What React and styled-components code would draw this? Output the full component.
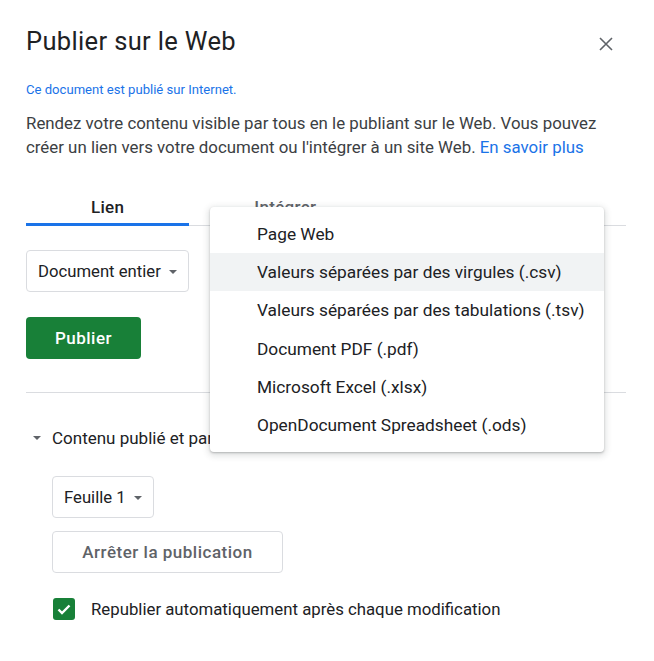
import React, { useState } from "react";
import styled, { createGlobalStyle } from "styled-components";

const GlobalStyle = createGlobalStyle`
  html, body {
    margin: 0;
    padding: 0;
    background: #ffffff;
  }
  body {
    font-family: Roboto, "Liberation Sans", Arial, sans-serif;
    color: #202124;
  }
  * {
    box-sizing: border-box;
  }
`;

const Dialog = styled.div`
  position: relative;
  width: 654px;
  height: 661px;
  padding: 25px 28px 0 26px;
  background: #fff;
  border-radius: 8px;
  overflow: hidden;
`;

const Header = styled.div`
  display: flex;
  align-items: center;
  justify-content: space-between;
  height: 32px;
`;

const Title = styled.h1`
  margin: 0;
  font-size: 25.5px;
  font-weight: 400;
  letter-spacing: 0.35px;
  line-height: 32px;
  color: #202124;
`;

const CloseButton = styled.button`
  display: flex;
  align-items: center;
  justify-content: center;
  width: 24px;
  height: 24px;
  margin-right: 8px;
  margin-top: 5px;
  padding: 0;
  border: none;
  background: none;
  cursor: pointer;
`;

const Status = styled.div`
  margin-top: 25px;
  font-size: 13.1px;
  line-height: 16px;
  color: #1a73e8;
`;

const Intro = styled.p`
  margin: 13px 0 0;
  font-size: 16.85px;
  line-height: 24px;
  color: #3c4043;
`;

const Link = styled.a`
  color: #1a73e8;
  text-decoration: none;
`;

const TabBar = styled.div`
  display: flex;
  margin-top: 30px;
  border-bottom: 1px solid #dadce0;
`;

const Tab = styled.div`
  position: relative;
  height: 36px;
  padding: 0 65px;
  line-height: 36px;
  text-align: center;
  font-size: 17px;
  font-weight: 500;
  letter-spacing: 0.3px;
  color: ${(p) => (p.$active ? "#202124" : "#5f6368")};

  &::after {
    content: "";
    display: ${(p) => (p.$active ? "block" : "none")};
    position: absolute;
    left: 0;
    right: 0;
    bottom: -1px;
    height: 3px;
    background: #1a73e8;
  }
`;

const Select = styled.div`
  display: inline-flex;
  align-items: center;
  gap: 8px;
  height: 42px;
  margin-top: ${(p) => p.$mt || 0}px;
  margin-left: ${(p) => p.$ml || 0}px;
  padding: 0 11px 0 11px;
  border: 1px solid #dadce0;
  border-radius: 4px;
  font-size: 16.7px;
  color: #202124;
`;

const Caret = styled.span`
  width: 0;
  height: 0;
  margin-top: 1px;
  border-left: 4px solid transparent;
  border-right: 4px solid transparent;
  border-top: 4px solid #5f6368;
`;

const Block = styled.div`
  display: flex;
`;

const PrimaryButton = styled.button`
  width: 115px;
  height: 42px;
  margin-top: 25px;
  border: none;
  border-radius: 4px;
  background: #188038;
  color: #fff;
  font-family: inherit;
  font-size: 17px;
  font-weight: 500;
  letter-spacing: 0.5px;
  cursor: pointer;
`;

const Divider = styled.hr`
  margin: 33px 0 0;
  border: none;
  border-top: 1px solid #dadce0;
`;

const Disclosure = styled.div`
  display: flex;
  align-items: center;
  gap: 11px;
  margin-top: 33px;
  padding-left: 7px;
  font-size: 17px;
  line-height: 24px;
  color: #202124;
`;

const SmallCaret = styled.span`
  width: 0;
  height: 0;
  border-left: 4px solid transparent;
  border-right: 4px solid transparent;
  border-top: 4px solid #5f6368;
`;

const OutlineButton = styled.button`
  display: block;
  width: 231px;
  height: 42px;
  margin: 13px 0 0 26px;
  border: 1px solid #dadce0;
  border-radius: 4px;
  background: #fff;
  color: #5f6368;
  font-family: inherit;
  font-size: 17px;
  font-weight: 500;
  letter-spacing: 0.5px;
  cursor: pointer;
`;

const CheckRow = styled.label`
  display: flex;
  align-items: center;
  gap: 16px;
  margin: 25px 0 0 27px;
  font-size: 16.8px;
  color: #202124;
`;

const CheckBox = styled.span`
  display: flex;
  align-items: center;
  justify-content: center;
  width: 22px;
  height: 22px;
  border-radius: 3px;
  background: ${(p) => (p.$checked ? "#188038" : "#fff")};
  border: ${(p) => (p.$checked ? "none" : "2px solid #5f6368")};
`;

const Menu = styled.ul`
  position: absolute;
  left: 210px;
  top: 207px;
  width: 394px;
  margin: 0;
  padding: 8px 0;
  list-style: none;
  background: #fff;
  border-radius: 4px;
  box-shadow: 0 1px 2px rgba(60, 64, 67, 0.3), 0 2px 6px 2px rgba(60, 64, 67, 0.15);
`;

const MenuItem = styled.li`
  height: 38.2px;
  line-height: 38px;
  padding-left: 47px;
  font-size: 17.3px;
  color: #202124;
  background: ${(p) => (p.$hover ? "#f1f3f4" : "transparent")};
  cursor: pointer;
`;

const formats = [
  "Page Web",
  "Valeurs séparées par des virgules (.csv)",
  "Valeurs séparées par des tabulations (.tsv)",
  "Document PDF (.pdf)",
  "Microsoft Excel (.xlsx)",
  "OpenDocument Spreadsheet (.ods)",
];

export default function App() {
  const [hovered, setHovered] = useState(1);
  const [autoRepublish, setAutoRepublish] = useState(true);

  return (
    <>
      <GlobalStyle />
      <Dialog>
        <Header>
          <Title>Publier sur le Web</Title>
          <CloseButton aria-label="Fermer">
            <svg width="14" height="14" viewBox="0 0 14 14">
              <path
                d="M1 1L13 13M13 1L1 13"
                stroke="#5f6368"
                strokeWidth="1.6"
                fill="none"
              />
            </svg>
          </CloseButton>
        </Header>

        <Status>Ce document est publié sur Internet.</Status>
        <Intro>
          Rendez votre contenu visible par tous en le publiant sur le Web. Vous
          pouvez créer un lien vers votre document ou l'intégrer à un site Web.{" "}
          <Link href="#">En savoir plus</Link>
        </Intro>

        <TabBar>
          <Tab $active>Lien</Tab>
          <Tab>Intégrer</Tab>
        </TabBar>

        <Block>
          <Select $mt={24}>
            Document entier
            <Caret />
          </Select>
        </Block>

        <PrimaryButton>Publier</PrimaryButton>

        <Divider />

        <Disclosure>
          <SmallCaret />
          Contenu publié et paramètres
        </Disclosure>

        <Block>
          <Select $mt={26} $ml={26}>
            Feuille 1
            <Caret />
          </Select>
        </Block>

        <OutlineButton>Arrêter la publication</OutlineButton>

        <CheckRow onClick={() => setAutoRepublish(!autoRepublish)}>
          <CheckBox $checked={autoRepublish}>
            {autoRepublish && (
              <svg width="16" height="16" viewBox="0 0 16 16">
                <path
                  d="M2.5 8.5L6 12L13.5 4.5"
                  stroke="#fff"
                  strokeWidth="2.4"
                  fill="none"
                />
              </svg>
            )}
          </CheckBox>
          Republier automatiquement après chaque modification
        </CheckRow>

        <Menu>
          {formats.map((f, i) => (
            <MenuItem
              key={f}
              $hover={hovered === i}
              onMouseEnter={() => setHovered(i)}
            >
              {f}
            </MenuItem>
          ))}
        </Menu>
      </Dialog>
    </>
  );
}
